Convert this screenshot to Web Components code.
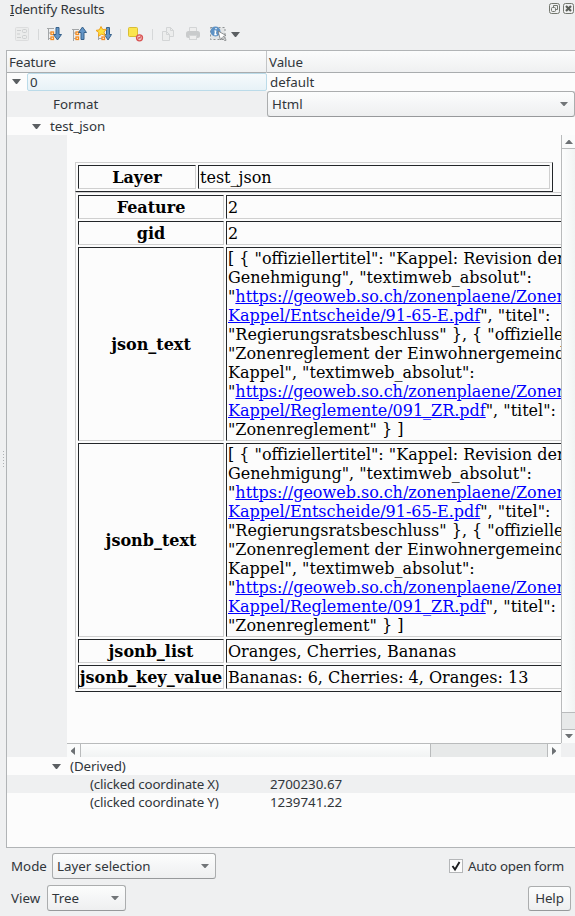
<!DOCTYPE html>
<html lang="en">
<head>
<meta charset="utf-8">
<title>Identify Results</title>
<style>
html,body{margin:0;height:916px;overflow:hidden;background:#eff0f1}
body{font-family:"Noto Sans",sans-serif;font-size:13.33px;color:#31363b}
</style>
</head>
<body>
<identify-panel></identify-panel>
<script>
const define = (name, html, setup) => customElements.define(name, class extends HTMLElement {
  constructor(){
    super();
    const t = document.createElement('template');
    t.innerHTML = html;
    this.attachShadow({mode:'open'}).append(t.content.cloneNode(true));
  }
  connectedCallback(){ if (setup) setup(this, this.shadowRoot); }
});

const ICONS = {
  form: `<rect x="2.500" y="2.500" width="13" height="13" rx="1" fill="#ebecec" stroke="#dcddde"/><g fill="none" stroke="#cdcfd0"><path d="M4 5.500h4M4 9h3M4 12.500h4"/><rect x="9.500" y="4.500" width="4" height="3" rx="1"/><rect x="9.500" y="10.500" width="4" height="3" rx="1"/></g>`,
  expand: `<path d="M2 3.500h7M3.500 3v12M3.500 8h3M3.500 13.500h3" stroke="#a3a6a8" fill="none"/><g fill="#fff" stroke="#f58b1e" stroke-width="1.300"><rect x="6" y="7" width="2.500" height="2.500"/><rect x="6" y="12" width="2.500" height="2.500"/></g><path d="M11 2.500h3v7h2.500l-4 5.500l-4-5.500h2.500z" fill="#6395c7" stroke="#38628b"/>`,
  collapse: `<path d="M2 4.500h7M3.500 5v11M3.500 8h3M3.500 13.500h3" stroke="#a3a6a8" fill="none"/><g fill="#fff" stroke="#f58b1e" stroke-width="1.300"><rect x="6" y="7" width="2.500" height="2.500"/><rect x="6" y="12" width="2.500" height="2.500"/></g><path d="M11 14.500h3v-7h2.500l-4-5.500l-4 5.500h2.500z" fill="#6395c7" stroke="#38628b"/>`,
  star: `<path d="M3.500 9v6M3.500 13.500h4" stroke="#a3a6a8" fill="none"/><rect x="7" y="12" width="2.500" height="2.500" fill="#fff" stroke="#f58b1e" stroke-width="1.300"/><path d="M11.500 2.500h3v7h2l-3.500 5.500l-3.500-5.500h2z" fill="#6395c7" stroke="#38628b"/><path d="M6 1.500l1.700 3 3.600-.2-2.400 2.800 1.400 3.400-3.600-1.300-3.200 2.100.3-3.700L1 5.400l3.400-.6z" fill="#fce23e" stroke="#f2a21c"/>`,
  clear: `<rect x="1.500" y="2.500" width="9" height="9" rx="1" fill="#fbe54e" stroke="#d9bd35"/><circle cx="12.500" cy="12.800" r="3" fill="#f3c9c9" stroke="#d95454" stroke-width="1.300"/><path d="M10.500 14.800l4-4M10.800 12.800h3.500" stroke="#d95454"/>`,
  copy: `<g fill="#eceded" stroke="#d3d5d6"><path d="M7.500 2.500h4l3 3v6h-7z"/><path d="M3.500 6.500h4l3 3v6h-7z"/><path d="M7.500 6.500v3h3M11.500 2.500v3h3" fill="none"/></g>`,
  print: `<path d="M5.500 7V2.500h7V7" fill="#eee" stroke="#d3d5d6"/><rect x="2" y="6" width="14" height="7" rx="2.500" fill="#c9cbcc"/><rect x="5.500" y="10.500" width="7" height="4" fill="#eee" stroke="#d3d5d6"/>`,
  identify: `<rect x="1.500" y="2.500" width="14.500" height="12" fill="#e3e5e6" stroke="#8f9294" stroke-dasharray="2 2"/><circle cx="6.500" cy="6.500" r="5" fill="#5e92c5"/><path d="M6.800 5.500L6 9.500h1.700M5.500 6h1M7 3v1.200" stroke="#fff" stroke-width="1.400" fill="none"/><path d="M9 6l2.500 9 1.700-2.500 3 3.500 1-1-3-3.500 2.800-1z" fill="#fff" stroke="#76797b" stroke-width=".8"/>`
};

define('tool-icon', `<style>:host{display:block;width:18px;height:18px}svg{display:block}</style><svg width="18" height="18" viewBox="0 0 18 18"></svg>`,
  (el, r) => { r.querySelector('svg').innerHTML = ICONS[el.getAttribute('name')]; });

define('down-arrow', `<style>:host{display:block;width:9px;height:5px;flex:none}svg{display:block;width:100%;height:100%}</style><svg viewBox="0 0 9 5" preserveAspectRatio="none"><path d="M0 0h9L5 5H4z" fill="#5b5f62"/></svg>`);

define('panel-title', `<style>
:host{display:flex;height:20px;box-sizing:border-box;padding:0 0 0 10px;line-height:19px}
.t{flex:1;letter-spacing:-.13px}.m{display:inline-block;height:15px;line-height:19px;border-bottom:1px solid #31363b;vertical-align:top}
svg{display:block;margin:3px 3px 0 0}svg:last-child{margin-right:1px}
</style><span class="t"><span class="m">I</span>dentify Results</span>
<svg width="11" height="11" viewBox="0 0 11 11" fill="none" stroke="#73776f"><rect x=".5" y=".5" width="10" height="10" rx="2"/><path d="M4.500 4.500v-2h4v4h-2"/><rect x="2.500" y="4.500" width="4" height="4" rx="1"/></svg>
<svg width="11" height="11" viewBox="0 0 11 11" fill="none" stroke="#73776f"><rect x=".5" y=".5" width="10" height="10" rx="2"/><path d="M3 3l5 5M8 3l-5 5" stroke="#5a5e58" stroke-width="2.200"/></svg>`);

define('tool-bar', `<style>
:host{display:flex;height:30px;box-sizing:border-box;padding:5px 0 0 13px}
i{display:block;width:1px;height:11px;background:#d6d8d9;margin:4px 6px 0 7px}
tool-icon{margin-right:7px}.n{margin-right:0}down-arrow{margin:7px 0 0 4px}
</style><tool-icon name="form" class="n"></tool-icon><i></i>
<tool-icon name="expand"></tool-icon><tool-icon name="collapse"></tool-icon><tool-icon name="star" class="n"></tool-icon><i></i>
<tool-icon name="clear" class="n"></tool-icon><i></i>
<tool-icon name="copy"></tool-icon><tool-icon name="print"></tool-icon><tool-icon name="identify" class="n"></tool-icon><down-arrow></down-arrow>`);

define('tree-header', `<style>
:host{display:grid;grid-template-columns:259px 1fr;height:22px;box-sizing:border-box;border-bottom:1px solid #a9acae;background:linear-gradient(#fbfcfc,#eff0f1);line-height:22px;letter-spacing:-.1px}
div{padding-left:2px}div+div{border-left:1px solid #c3c5c7}
</style><div>Feature</div><div>Value</div>`);

define('tree-row', `<style>
:host{display:grid;grid-template-columns:260px 1fr;height:18px;line-height:18px;white-space:nowrap}
:host([alt]){background:#eff0f1}:host([tall]){height:26px;line-height:26px}
.k{display:flex;align-items:center;padding-left:var(--indent,0)}
.k down-arrow{margin-right:9px}
.k span{flex:1;letter-spacing:var(--track,0)}
:host([current]) .k span{height:18px;box-sizing:border-box;border:1px solid #bbdbe9;border-radius:2px;background:linear-gradient(#f6fafc,#e7f2f7);line-height:17px;padding-left:2px}
:host([current]) .k down-arrow{margin:0 6px 2px 0}
.v{padding-left:3px}:host([tall]) .v{padding:0}
</style><div class="k"><down-arrow></down-arrow><span><slot></slot></span></div><div class="v"><slot name="value"></slot></div>`,
(el, r) => { if (!el.hasAttribute('open')) r.querySelector('down-arrow').remove(); });

define('combo-box', `<style>
:host{display:flex;align-items:center;height:26px;box-sizing:border-box;border:1px solid #abadae;border-bottom-color:#97999b;border-radius:3px;background:linear-gradient(#fcfdfd,#eeeff0);padding:0 6px 0 4px;line-height:24px;white-space:nowrap}
span{flex:1}down-arrow{width:8px;height:4px;opacity:.85}
</style><span><slot></slot></span><down-arrow></down-arrow>`);

define('scroll-bar', `<style>
:host{display:flex;box-sizing:border-box;background:#e7e9e9}
:host([vertical]){flex-direction:column;width:14px;border-left:1px solid #b9bbbc}
:host([horizontal]){height:14px;border-top:1px solid #b9bbbc}
.b{flex:none;display:grid;place-items:center;background:#fafbfb;box-sizing:border-box}
:host([vertical]) .b{height:13px}:host([horizontal]) .b{width:13px}
:host([vertical]) .l{height:14px;padding-bottom:1px;border-top:1px solid #b9bbbc}
:host([horizontal]) .l{width:14px;padding-right:1px;border-left:1px solid #b9bbbc}
:host([horizontal]) .b:not(.l){padding-right:2px}
.h{box-sizing:border-box}
:host([vertical]) .h{height:565px;border-top:1px solid #b9bbbc;border-bottom:1px solid #b9bbbc;background:linear-gradient(90deg,#fcfdfd,#f1f3f3)}
:host([horizontal]) .h{width:351px;border-left:1px solid #b9bbbc;border-right:1px solid #b9bbbc;background:linear-gradient(#fcfdfd,#f1f3f3)}
.g{flex:1}svg{display:block}
</style><div class="b"><svg width="8" height="8"></svg></div><div class="h"></div><div class="g"></div><div class="b l"><svg width="8" height="8"></svg></div>`,
(el, r) => {
  const d = el.hasAttribute('vertical') ? ['M0 6h8L4.500 2h-1z','M0 2h8L4.500 6h-1z'] : ['M6 0v8L2 4.500v-1z','M2 0v8l4-3.500v-1z'];
  r.querySelectorAll('svg').forEach((s, i) => { s.innerHTML = `<path d="${d[i]}" fill="#6d7174"/>`; });
});

define('html-table', `<style>
:host{display:block;box-sizing:border-box;border:1px solid;border-color:#d0d0d0 #232629 #232629 #d0d0d0;padding:2px}
</style><slot></slot>`);

define('html-row', `<style>
:host{display:grid;grid-template-columns:var(--key) 1fr;column-gap:2px;height:var(--h,24px);margin-bottom:2px}
:host(:last-child){margin-bottom:0}
div{box-sizing:border-box;border:1px solid;border-color:#232629 #d0d0d0 #d0d0d0 #232629;min-width:0;display:flex;flex-direction:column;justify-content:center;padding:0 1px;white-space:nowrap}
.k{font-weight:bold;align-items:center}
</style><div class="k"><slot name="key"></slot></div><div><slot></slot></div>`);

define('json-text', `<style>:host{display:block;line-height:19px}p{margin:0}a{color:#0000ff;text-decoration:underline}</style>
<p>[ { "offiziellertitel": "Kappel: Revision der</p><p>Genehmigung", "textimweb_absolut":</p>
<p>"<a>https://geoweb.so.ch/zonenplaene/Zonen</a></p><p><a>Kappel/Entscheide/91-65-E.pdf</a>", "titel":</p>
<p>"Regierungsratsbeschluss" }, { "offizielle</p><p>"Zonenreglement der Einwohnergemeind</p><p>Kappel", "textimweb_absolut":</p>
<p>"<a>https://geoweb.so.ch/zonenplaene/Zonen</a></p><p><a>Kappel/Reglemente/091_ZR.pdf</a>", "titel":</p><p>"Zonenreglement" } ]</p>`);

define('html-view', `<style>
:host{display:grid;grid-template-columns:494px 14px;grid-template-rows:608px 14px;margin-left:60px;width:508px;height:622px;background:#fcfcfc}
.page{overflow:hidden;padding:27px 0 0 8px;box-sizing:border-box;font:16px/19px "DejaVu Serif",serif;color:#000}
.a{width:478px;height:30px;--key:118px}.b{width:640px;--key:146px}
.corner{background:#eff0f1}
</style><div class="page">
<html-table class="a"><html-row><span slot="key">Layer</span>test_json</html-row></html-table>
<html-table class="b">
<html-row><span slot="key">Feature</span>2</html-row>
<html-row><span slot="key">gid</span>2</html-row>
<html-row style="--h:194px"><span slot="key">json_text</span><json-text></json-text></html-row>
<html-row style="--h:194px"><span slot="key">jsonb_text</span><json-text></json-text></html-row>
<html-row><span slot="key">jsonb_list</span>Oranges, Cherries, Bananas</html-row>
<html-row><span slot="key">jsonb_key_value</span>Bananas: 6, Cherries: 4, Oranges: 13</html-row>
</html-table></div><scroll-bar vertical></scroll-bar><scroll-bar horizontal></scroll-bar><div class="corner"></div>`);

define('check-box', `<style>:host{display:flex;align-items:center;gap:5px}svg{display:block}span{letter-spacing:-.22px}</style>
<svg width="14" height="14" viewBox="0 0 14 14"><rect x=".5" y=".5" width="13" height="13" fill="#fcfcfc" stroke="#b4b6b8"/><path d="M3.500 7l2.500 3.500L10.500 3" fill="none" stroke="#1c1e20" stroke-width="1.900"/></svg><span><slot></slot></span>`);

define('push-button', `<style>:host{display:grid;place-items:center;box-sizing:border-box;width:43px;height:25px;border:1px solid #abadae;border-bottom-color:#97999b;border-radius:3px;background:linear-gradient(#fcfdfd,#eeeff0);letter-spacing:-.1px}</style><span><slot></slot></span>`);

define('identify-panel', `<style>
:host{display:flex;flex-direction:column;width:575px;height:916px;overflow:hidden}
.main{display:flex;height:798px}
.grip{width:6px;display:flex;flex-direction:column;gap:2px;align-items:center;padding-top:401px;box-sizing:border-box}
.grip i{width:1px;height:1px;background:#aeb1b3}
.tree{width:569px;box-sizing:border-box;border:1px solid #b1b4b6;border-right:0;background:#fcfcfc;overflow:hidden}
.web{background:#eff0f1}
.foot{display:flex;align-items:center;height:26px;padding:0 11px;margin-top:5px}
.foot+.foot{margin-top:6px;padding-right:4px}
.gap{flex:1}
</style><panel-title></panel-title><tool-bar></tool-bar>
<div class="main"><div class="grip"><i></i><i></i><i></i><i></i><i></i><i></i></div><div class="tree">
<tree-header></tree-header>
<tree-row open current style="--indent:5px">0<span slot="value">default</span></tree-row>
<tree-row alt tall style="--indent:46px">Format<combo-box slot="value">Html</combo-box></tree-row>
<tree-row open style="--indent:25px;--track:-.05px">test_json</tree-row>
<div class="web"><html-view></html-view></div>
<tree-row open style="--indent:45px;--track:-.1px">(Derived)</tree-row>
<tree-row alt style="--indent:83px;--track:-.18px">(clicked coordinate X)<span slot="value">2700230.67</span></tree-row>
<tree-row style="--indent:83px;--track:-.18px">(clicked coordinate Y)<span slot="value">1239741.22</span></tree-row>
</div></div>
<div class="foot"><span style="width:41px">Mode</span><combo-box style="width:164px">Layer selection</combo-box><span class="gap"></span><check-box>Auto open form</check-box></div>
<div class="foot"><span style="width:36px">View</span><combo-box style="width:79px">Tree</combo-box><span class="gap"></span><push-button>Help</push-button></div>`);
</script>
</body>
</html>
